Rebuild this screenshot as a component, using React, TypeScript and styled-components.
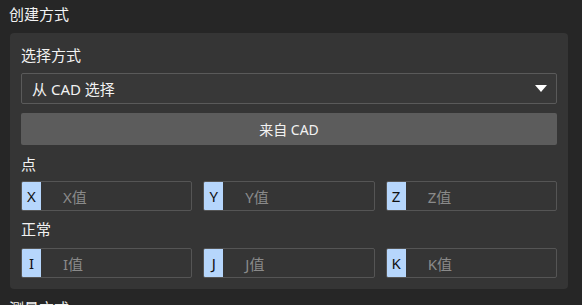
import React, { FC } from 'react';
import styled, { createGlobalStyle } from 'styled-components';

const GlobalStyle = createGlobalStyle`
  html, body {
    margin: 0;
    padding: 0;
    background: #262626;
    overflow: hidden;
  }
  body {
    font-family: "Noto Sans", "Noto Sans CJK SC", sans-serif;
    color: #f2f2f2;
  }
`;

const Page = styled.div`
  width: 582px;
  height: 305px;
  padding-top: 4px;
  box-sizing: border-box;
`;

const SectionTitle = styled.div`
  font-size: 15px;
  line-height: 20px;
  padding-left: 9px;
  margin-bottom: 9px;
`;

const Panel = styled.div`
  margin: 0 14px 9px 10px;
  background: #353535;
  border-radius: 4px;
  padding: 12px 11px 11px;
  display: flex;
  flex-direction: column;
`;

const Label = styled.div<{ $gap: number }>`
  font-size: 15px;
  line-height: 20px;
  margin-bottom: ${p => p.$gap}px;
`;

const Select = styled.div`
  height: 31px;
  box-sizing: border-box;
  border: 1px solid #5a5a5a;
  border-radius: 2px;
  background: #383838;
  display: flex;
  align-items: center;
  justify-content: space-between;
  padding: 0 9px 0 10px;
  font-size: 15px;
  margin-bottom: 9px;
`;

const Caret = styled.span`
  width: 0;
  height: 0;
  border-left: 6px solid transparent;
  border-right: 6px solid transparent;
  border-top: 7px solid #ffffff;
`;

const Button = styled.button`
  height: 32px;
  border: none;
  border-radius: 2px;
  background: #5c5c5c;
  color: #f2f2f2;
  font-family: inherit;
  font-size: 14px;
  margin-bottom: 9px;
  padding: 0;
`;

const Row = styled.div<{ $gap: number }>`
  display: grid;
  grid-template-columns: repeat(3, 1fr);
  column-gap: 11px;
  margin-bottom: ${p => p.$gap}px;
`;

const Field = styled.div`
  height: 30px;
  box-sizing: border-box;
  border: 1px solid #555555;
  border-radius: 2px;
  display: flex;
  align-items: stretch;
  overflow: hidden;
`;

const Prefix = styled.span`
  width: 19px;
  background: #b6d6fc;
  color: #111111;
  font-size: 15px;
  display: flex;
  align-items: center;
  justify-content: center;
`;

const Placeholder = styled.span`
  flex: 1;
  display: flex;
  align-items: center;
  padding-left: 22px;
  color: #8a8a8a;
  font-size: 15px;
`;

const axes = [
  [
    ['X', 'X值'],
    ['Y', 'Y值'],
    ['Z', 'Z值'],
  ],
  [
    ['I', 'I值'],
    ['J', 'J值'],
    ['K', 'K值'],
  ],
];

const App: FC = () => {
  return (
    <Page>
      <GlobalStyle />
      <SectionTitle>创建方式</SectionTitle>
      <Panel>
        <Label $gap={8}>选择方式</Label>
        <Select>
          <span>从 CAD 选择</span>
          <Caret />
        </Select>
        <Button>来自 CAD</Button>
        <Label $gap={7}>点</Label>
        <Row $gap={8}>
          {axes[0].map(([k, v]) => (
            <Field key={k}>
              <Prefix>{k}</Prefix>
              <Placeholder>{v}</Placeholder>
            </Field>
          ))}
        </Row>
        <Label $gap={9}>正常</Label>
        <Row $gap={0}>
          {axes[1].map(([k, v]) => (
            <Field key={k}>
              <Prefix>{k}</Prefix>
              <Placeholder>{v}</Placeholder>
            </Field>
          ))}
        </Row>
      </Panel>
      <SectionTitle>测量方式</SectionTitle>
    </Page>
  );
};

export default App;
